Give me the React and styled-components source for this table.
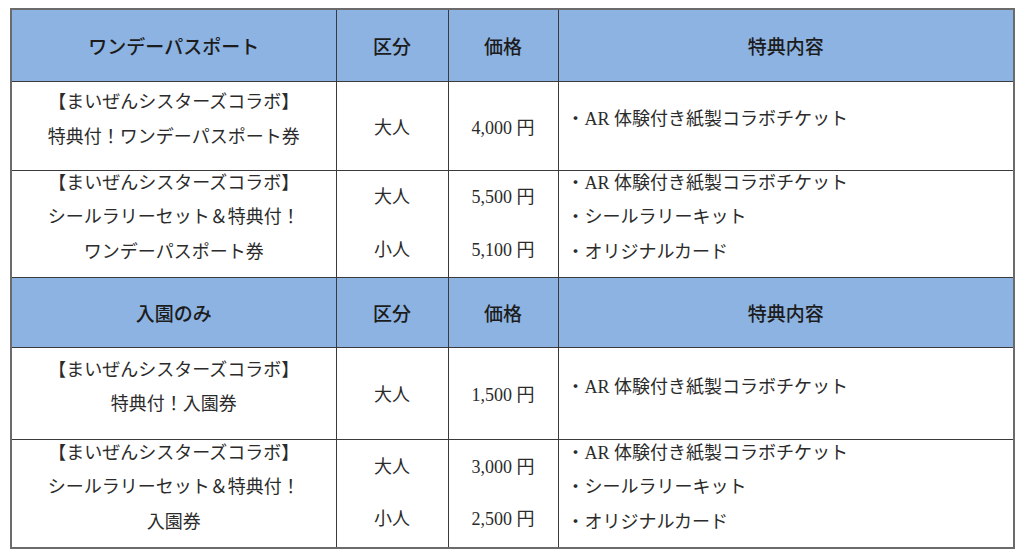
import React from 'react';
import styled, { createGlobalStyle } from 'styled-components';

const GlobalStyle = createGlobalStyle`
  body {
    margin: 0;
    padding: 8px 0 0 10px;
    background: #ffffff;
    font-family: 'Liberation Serif', 'Noto Sans CJK JP', serif;
    color: #2b2b2b;
  }
`;

const Table = styled.table`
  border-collapse: collapse;
  width: 1003px;
  table-layout: fixed;
  border: 2px solid #6b6b6b;
  font-size: 18px;
`;

const HeadRow = styled.tr`
  height: ${p => p.h}px;
  background: #8db3e2;
`;

const HeadCell = styled.th`
  border: 1px solid #3a3a3a;
  font-weight: 500;
  font-size: 19px;
  color: #1c1c1c;
  text-align: center;
  vertical-align: middle;
  padding: 0;
`;

const BodyRow = styled.tr`
  height: ${p => p.h}px;
`;

const Cell = styled.td`
  border: 1px solid #3a3a3a;
  text-align: ${p => (p.left ? 'left' : 'center')};
  padding: ${p => (p.left ? '0 0 0 8px' : '0')};
  vertical-align: middle;
`;

/* lifts the text block a little above the cell's middle, as in the original */
const Raised = styled.div`
  margin-top: -12px;
`;

const Stack = styled.div`
  display: flex;
  flex-direction: column;
  gap: 18px;
`;

const Line = styled.div`
  line-height: 34.5px;
`;

const Header = ({ title, h }) => (
  <HeadRow h={h}>
    <HeadCell>{title}</HeadCell>
    <HeadCell>区分</HeadCell>
    <HeadCell>価格</HeadCell>
    <HeadCell>特典内容</HeadCell>
  </HeadRow>
);

const fullPerks = ['・AR 体験付き紙製コラボチケット', '・シールラリーキット', '・オリジナルカード'];

const SingleRow = ({ h, name, price }) => (
  <BodyRow h={h}>
    <Cell>
      <Raised>
        <Line>【まいぜんシスターズコラボ】</Line>
        <Line>{name}</Line>
      </Raised>
    </Cell>
    <Cell>大人</Cell>
    <Cell>{price}</Cell>
    <Cell left>
      <Raised>
        <Line>{fullPerks[0]}</Line>
      </Raised>
    </Cell>
  </BodyRow>
);

const SetRow = ({ h, last, adult, child }) => (
  <BodyRow h={h}>
    <Cell>
      <Raised>
        <Line>【まいぜんシスターズコラボ】</Line>
        <Line>シールラリーセット＆特典付！</Line>
        <Line>{last}</Line>
      </Raised>
    </Cell>
    <Cell>
      <Stack>
        <Line>大人</Line>
        <Line>小人</Line>
      </Stack>
    </Cell>
    <Cell>
      <Stack>
        <Line>{adult}</Line>
        <Line>{child}</Line>
      </Stack>
    </Cell>
    <Cell left>
      <Raised>
        {fullPerks.map(p => (
          <Line key={p}>{p}</Line>
        ))}
      </Raised>
    </Cell>
  </BodyRow>
);

export default function App() {
  return (
    <>
      <GlobalStyle />
      <Table>
        <colgroup>
          <col style={{ width: 325 }} />
          <col style={{ width: 112 }} />
          <col style={{ width: 110 }} />
          <col style={{ width: 456 }} />
        </colgroup>
        <tbody>
          <Header title="ワンデーパスポート" h={72} />
          <SingleRow h={89} name="特典付！ワンデーパスポート券" price="4,000 円" />
          <SetRow h={107} last="ワンデーパスポート券" adult="5,500 円" child="5,100 円" />
          <Header title="入園のみ" h={70} />
          <SingleRow h={92} name="特典付！入園券" price="1,500 円" />
          <SetRow h={109} last="入園券" adult="3,000 円" child="2,500 円" />
        </tbody>
      </Table>
    </>
  );
}
